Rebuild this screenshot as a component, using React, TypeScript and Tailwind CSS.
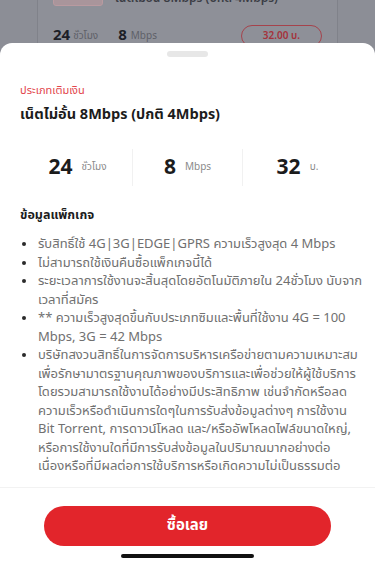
import React from 'react';

// each entry is one bullet, split into the lines the reference shows
const details: string[][] = [
    ['รับสิทธิ์ใช้ 4G|3G|EDGE|GPRS ความเร็วสูงสุด 4 Mbps'],
    ['ไม่สามารถใช้เงินคืนซื้อแพ็กเกจนี้ได้'],
    ['ระยะเวลาการใช้งานจะสิ้นสุดโดยอัตโนมัติภายใน 24ชั่วโมง นับจาก', 'เวลาที่สมัคร'],
    ['** ความเร็วสูงสุดขึ้นกับประเภทซิมและพื้นที่ใช้งาน 4G = 100', 'Mbps, 3G = 42 Mbps'],
    [
        'บริษัทสงวนสิทธิ์ในการจัดการบริหารเครือข่ายตามความเหมาะสม',
        'เพื่อรักษามาตรฐานคุณภาพของบริการและเพื่อช่วยให้ผู้ใช้บริการ',
        'โดยรวมสามารถใช้งานได้อย่างมีประสิทธิภาพ เช่นจำกัดหรือลด',
        'ความเร็วหรือดำเนินการใดๆในการรับส่งข้อมูลต่างๆ การใช้งาน',
        'Bit Torrent, การดาวน์โหลด และ/หรืออัพโหลดไฟล์ขนาดใหญ่,',
        'หรือการใช้งานใดที่มีการรับส่งข้อมูลในปริมาณมากอย่างต่อ',
        'เนื่องหรือที่มีผลต่อการใช้บริการหรือเกิดความไม่เป็นธรรมต่อ',
    ],
];

const stats = [
    { value: '24', unit: 'ชั่วโมง' },
    { value: '8', unit: 'Mbps' },
    { value: '32', unit: 'บ.' },
];

const StatCell: React.FC<{ value: string; unit: string; first?: boolean }> = ({ value, unit, first }) => (
    <div className={`flex-1 flex items-center justify-center ${first ? '' : 'border-l border-[#f1f1f1]'}`}>
        <span className="text-[21px] font-bold text-[#1c1c1c] leading-none">{value}</span>
        <span className="ml-[9px] text-[10px] text-[#8a8a8a]">{unit}</span>
    </div>
);

const App: React.FC = () => {
    return (
        <div
            className="relative w-[375px] h-[563px] overflow-hidden bg-[#8c8e96]"
            style={{ fontFamily: "'Noto Sans Thai', 'Noto Sans', 'Liberation Sans', sans-serif" }}
        >
            {/* Page behind the overlay */}
            <div className="mx-[37px] -mt-[11px] h-[80px] border-x border-[#80828a] bg-[#8e9098] px-[15px]">
                <div className="flex items-center gap-[12px]">
                    <div className="h-[15px] w-[50px] rounded-[3px] border border-[#b99aa0] bg-[#a9959b]" />
                    <span className="text-[12px] font-semibold leading-[18px] text-[#3b3d45]">เน็ตไม่อั้น 8Mbps (ปกติ 4Mbps)</span>
                </div>
                <div className="mt-[18px] flex items-center">
                    <span className="text-[15px] font-bold text-[#1d1f27]">24</span>
                    <span className="ml-[3px] text-[10px] text-[#5e6068]">ชั่วโมง</span>
                    <span className="ml-[20px] text-[15px] font-bold text-[#1d1f27]">8</span>
                    <span className="ml-[4px] text-[10px] text-[#5e6068]">Mbps</span>
                    <div className="ml-auto flex h-[22px] w-[81px] items-center justify-center rounded-full border border-[#a5434c]">
                        <span className="text-[10px] font-semibold text-[#a5323b]">32.00 บ.</span>
                    </div>
                </div>
            </div>

            {/* Bottom sheet */}
            <div className="absolute inset-x-0 top-[43px] bottom-0 flex flex-col rounded-t-[12px] bg-white">
                <div className="mx-auto mt-[8px] h-[6px] w-[41px] rounded-full bg-[#e7e7e7]" />

                <div className="flex-1 overflow-hidden">
                    <div className="px-5 pt-[27px]">
                        <p className="text-[11px] leading-[14px] text-[#e2454c]">ประเภทเติมเงิน</p>
                        <h2 className="mt-[7px] text-[14.5px] font-bold leading-[20px] text-[#1c1c1c]">
                            เน็ตไม่อั้น 8Mbps (ปกติ 4Mbps)
                        </h2>
                    </div>

                    <div className="mt-[24px] flex h-[37px] px-[23px]">
                        {stats.map((s, i) => (
                            <StatCell key={s.unit} value={s.value} unit={s.unit} first={i === 0} />
                        ))}
                    </div>

                    <div className="px-5 pt-[22px]">
                        <h3 className="text-[12.5px] font-bold leading-[16px] text-[#1c1c1c]">ข้อมูลแพ็กเกจ</h3>
                        <ul className="mt-[11px]">
                            {details.map((lines) => (
                                <li key={lines[0]} className="flex text-[13px] leading-[18.5px] text-[#707070]">
                                    <span className="mt-[7px] ml-[2px] h-[4px] w-[4px] shrink-0 rounded-full bg-[#2b2b2b]" />
                                    <span className="ml-[12px] flex flex-col">
                                        {lines.map((l) => (
                                            <span key={l} className="whitespace-nowrap">{l}</span>
                                        ))}
                                    </span>
                                </li>
                            ))}
                        </ul>
                    </div>
                </div>

                <div className="flex h-[76px] shrink-0 flex-col items-center border-t border-[#f2f2f2] bg-white">
                    <button className="mt-[18px] flex h-[40px] w-[287px] items-center justify-center rounded-full bg-[#e2252b]">
                        <span className="text-[15px] font-bold text-white">ซื้อเลย</span>
                    </button>
                    <div className="mt-[8px] h-[4px] w-[133px] rounded-full bg-[#111111]" />
                </div>
            </div>
        </div>
    );
};

export default App;
